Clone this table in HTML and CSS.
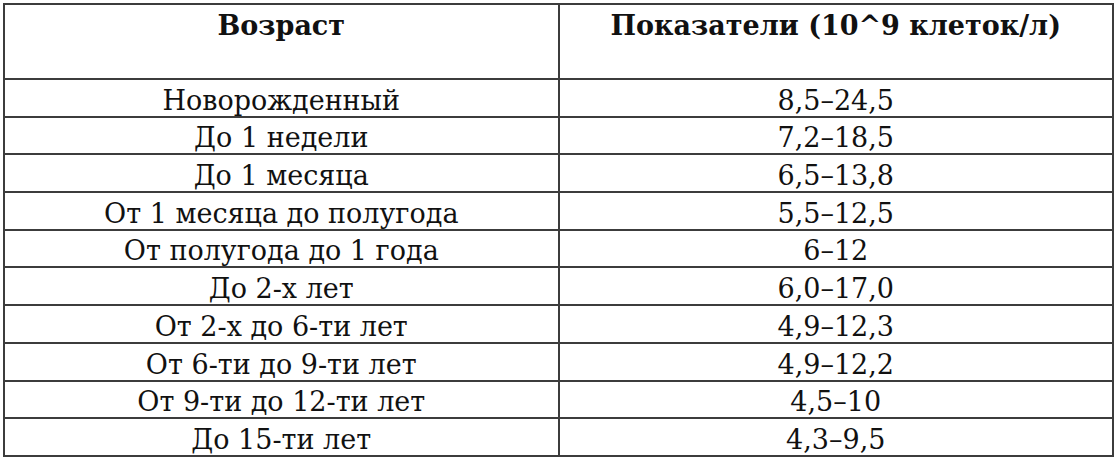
FILE: index.html
```html
<!DOCTYPE html>
<html lang="ru">
<head>
<meta charset="utf-8">
<link rel="stylesheet" href="styles.css">
</head>
<body>
<div class="page">
<table class="norms">
  <thead>
    <tr><th>Возраст</th><th>Показатели (10^9 клеток/л)</th></tr>
  </thead>
  <tbody>
    <tr><td>Новорожденный</td><td>8,5–24,5</td></tr>
    <tr><td>До 1 недели</td><td>7,2–18,5</td></tr>
    <tr><td>До 1 месяца</td><td>6,5–13,8</td></tr>
    <tr><td>От 1 месяца до полугода</td><td>5,5–12,5</td></tr>
    <tr><td>От полугода до 1 года</td><td>6–12</td></tr>
    <tr><td>До 2-х лет</td><td>6,0–17,0</td></tr>
    <tr><td>От 2-х до 6-ти лет</td><td>4,9–12,3</td></tr>
    <tr><td>От 6-ти до 9-ти лет</td><td>4,9–12,2</td></tr>
    <tr><td>От 9-ти до 12-ти лет</td><td>4,5–10</td></tr>
    <tr><td>До 15-ти лет</td><td>4,3–9,5</td></tr>
  </tbody>
</table>
</div>
</body>
</html>
```
FILE: styles.css
```css
html, body {
  margin: 0;
  padding: 0;
  background: #fff;
}
.page {
  padding: 3px 0 0 3px;
}
.norms {
  border-collapse: collapse;
  width: 1111px;
  table-layout: fixed;
  font-family: "DejaVu Serif", "Liberation Serif", serif;
  color: #111;
}
.norms th,
.norms td {
  border: 2px solid #3c3c3c;
  padding: 0;
  text-align: center;
  width: 50%;
}
.norms th {
  height: 75px;
  vertical-align: top;
  font-size: 27px;
  font-weight: bold;
  line-height: 28px;
  padding-top: 7px;
  box-sizing: border-box;
}
.norms td {
  height: 37.7px;
  font-size: 27px;
  line-height: 29px;
  vertical-align: bottom;
  padding-bottom: 1px;
  box-sizing: border-box;
}
```
